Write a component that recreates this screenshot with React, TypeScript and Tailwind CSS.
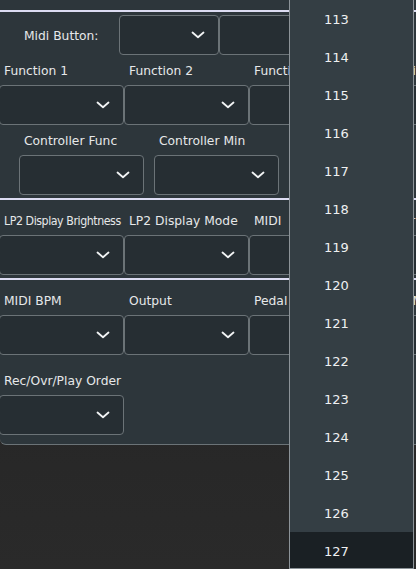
import React from "react";

const labelCls = "h-[20px] pt-[2px] flex items-center text-[12.3px] leading-none text-[#e6e8e9] whitespace-nowrap";

function Chevron() {
  return (
    <svg width="14" height="8" viewBox="0 0 14 8" fill="none">
      <path d="M1.5 1.5 L7 6.2 L12.5 1.5" stroke="#f2f4f5" strokeWidth="1.8" strokeLinecap="round" strokeLinejoin="round" />
    </svg>
  );
}

function Select({ w = "w-[125px]" }: { w?: string }) {
  return (
    <div className={`${w} h-[40px] shrink-0 rounded-[4px] border border-[#6b7377] bg-[#262e33] flex items-center justify-end pr-[13px]`}>
      <Chevron />
    </div>
  );
}

function Field({ label, tight }: { label: string; tight?: boolean }) {
  return (
    <div className="w-[125px] shrink-0 flex flex-col gap-[5px]">
      <div
        className={`${labelCls} pl-[5px] ${tight ? "font-['DejaVu_Sans_Condensed'] tracking-[-0.45px]" : ""}`}
      >
        {label}
      </div>
      <Select />
    </div>
  );
}

function Row({ labels, className = "" }: { labels: string[]; className?: string }) {
  return (
    <div className={`flex -ml-px ${className}`}>
      {labels.map((l, i) => (
        <Field key={l + i} label={l} tight={l === "LP2 Display Brightness"} />
      ))}
    </div>
  );
}

function Divider() {
  return <div className="h-[2px] bg-[#dcdcf2]" />;
}

const values = Array.from({ length: 15 }, (_, i) => 113 + i);

export default function App() {
  return (
    <div className="relative w-[416px] h-[569px] overflow-hidden bg-gradient-to-b from-[#1f1f1f] to-[#2a2a2a] font-['DejaVu_Sans',sans-serif]">
      <div className="w-[540px] bg-[#2d363b] border-b border-[#6b7377] rounded-bl-[6px]">
        <div className="h-[10px]" />
        <Divider />

        {/* mapping block */}
        <div className="h-[186px] pt-[3px]">
          <div className="flex items-center h-[40px]">
            <div className={`${labelCls} pl-[24px] w-[119px]`}>Midi Button:</div>
            <Select w="w-[100px]" />
            <Select w="w-[100px]" />
          </div>
          <Row className="pt-[5px]" labels={["Function 1", "Function 2", "Function 3", "Function 4"]} />
          <div className="flex gap-[10px] pl-[19px] pt-[5px]">
            <div className="w-[125px] shrink-0 flex flex-col gap-[5px]">
              <div className={`${labelCls} pl-[5px]`}>Controller Func</div>
              <Select />
            </div>
            <div className="w-[125px] shrink-0 flex flex-col gap-[5px]">
              <div className={`${labelCls} pl-[5px]`}>Controller Min</div>
              <Select />
            </div>
          </div>
        </div>
        <Divider />

        {/* display block */}
        <div className="h-[78px] pt-[10px]">
          <Row labels={["LP2 Display Brightness", "LP2 Display Mode", "MIDI", "Mirror"]} />
        </div>
        <Divider />

        {/* clock / output block */}
        <div className="pt-[10px] pb-[9px] flex flex-col gap-[15px]">
          <Row labels={["MIDI BPM", "Output", "Pedal", "Loop Mode"]} />
          <Row labels={["Rec/Ovr/Play Order"]} />
        </div>
      </div>

      {/* open value list */}
      <div className="absolute left-[289px] top-0 w-[125px] h-[569px] overflow-hidden bg-[#343e44] border-x border-b border-[#8c9398]">
        {values.map((v) => (
          <div
            key={v}
            className={`h-[38px] pt-[2px] flex items-center pl-[34px] text-[13px] text-[#eef0f1] ${
              v === 127 ? "bg-[#1a2024]" : ""
            }`}
          >
            {v}
          </div>
        ))}
      </div>
    </div>
  );
}
